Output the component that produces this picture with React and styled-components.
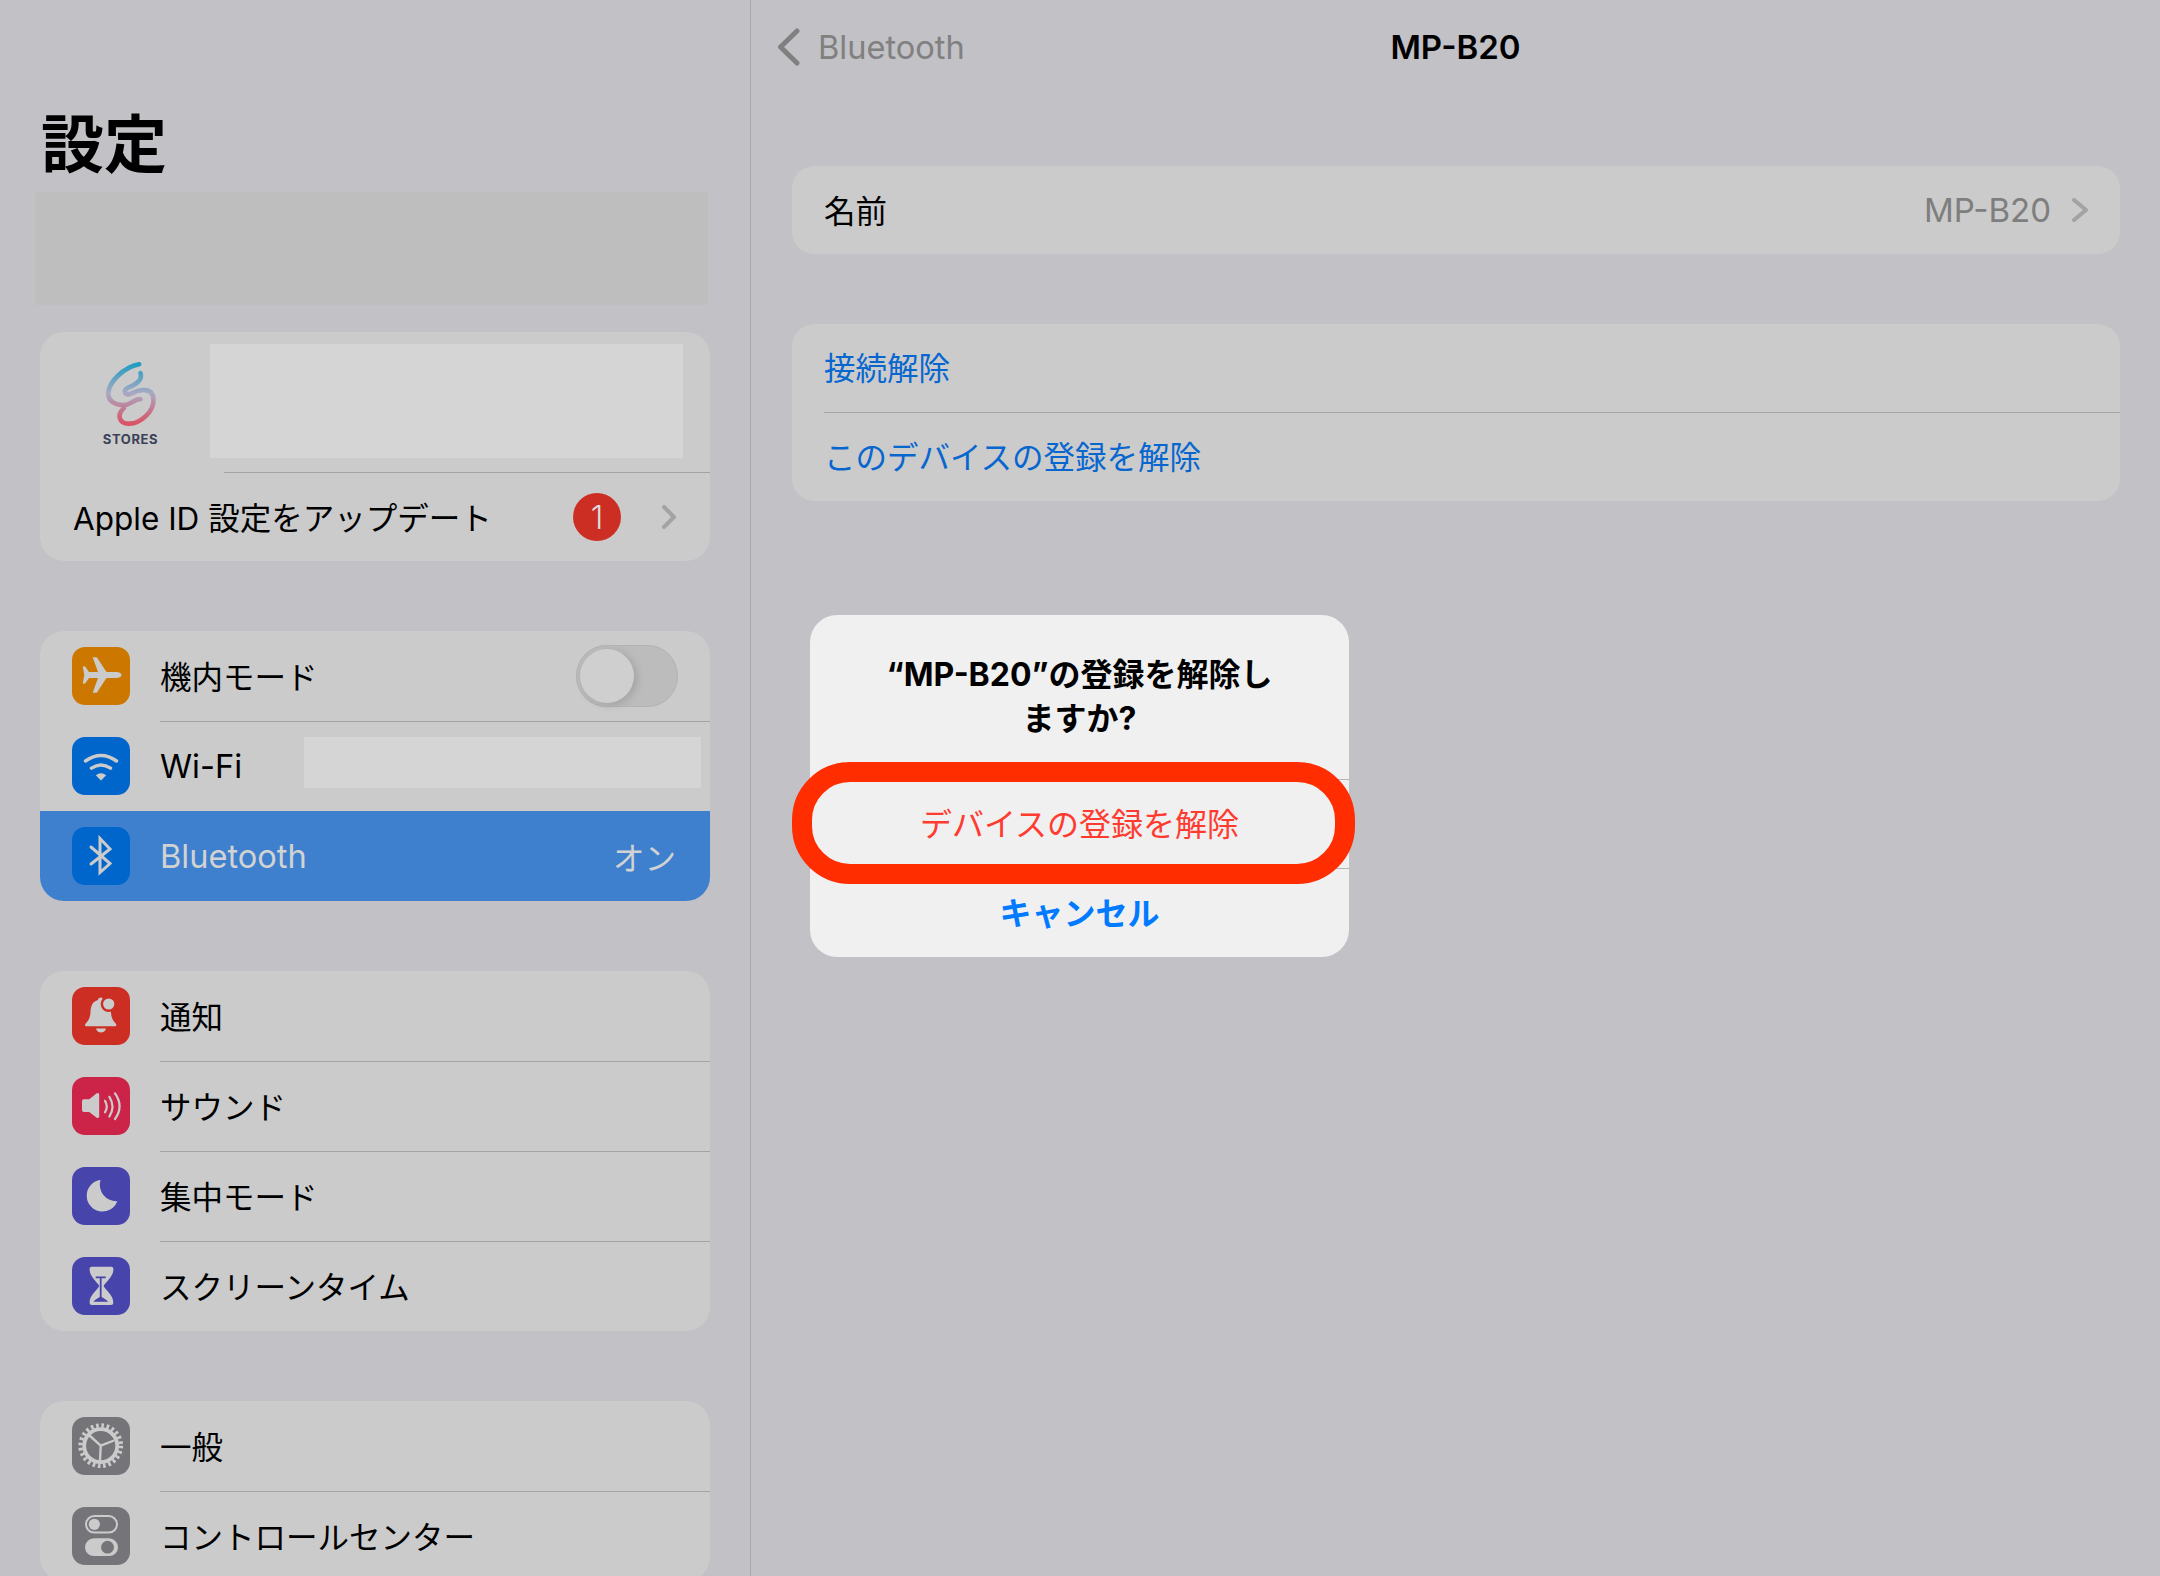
import React from 'react';
import styled, { createGlobalStyle } from 'styled-components';

const Global = createGlobalStyle`
  html, body { margin: 0; padding: 0; background: #c1c1c6; }
  body { font-family: Inter, "Noto Sans CJK JP", sans-serif; }
`;

const Screen = styled.div`
  position: relative;
  width: 2160px;
  height: 1576px;
  overflow: hidden;
  display: flex;
  background: #c1c1c6;
  font-size: 31.5px;
  color: #000;
`;
const Sidebar = styled.aside`
  width: 750px;
  flex: none;
  border-right: 1px solid #a9a9ae;
  display: flex;
  flex-direction: column;
`;
const LargeTitle = styled.h1`
  margin: 100px 0 0 41px;
  height: 92px;
  flex: none;
  font-size: 63px;
  line-height: 88px;
  font-weight: 700;
`;
const SearchPatch = styled.div`
  margin: 0 0 27px 35px;
  width: 673px;
  height: 113px;
  flex: none;
  background: #bebebe;
`;
const Group = styled.section`
  margin: 0 40px 70px 40px;
  flex: none;
  background: #cbcbcb;
  border-radius: 24px;
  overflow: hidden;
`;
const AccountTop = styled.div`
  height: 140px;
  display: flex;
  align-items: flex-start;
`;
const LogoCol = styled.div`
  width: 170px;
  padding: 28px 0 0 11px;
  box-sizing: border-box;
  display: flex;
  flex-direction: column;
  align-items: center;
`;
const StoresWord = styled.span`
  font-size: 13px;
  line-height: 14px;
  font-weight: 700;
  letter-spacing: 0.6px;
  color: #3a4258;
  margin-top: 4px;
`;
const RedactedAccount = styled.div`
  margin-top: 12px;
  width: 473px;
  height: 114px;
  background: #d5d5d5;
`;
const AccountRow = styled.div`
  margin-left: 33px;
  height: 88px;
  display: flex;
  align-items: center;
  padding-right: 34px;
`;
const Rule = styled.div`
  height: 1px;
  margin-left: ${(p) => p.$inset}px;
  background: #a3a3a4;
`;
const Badge = styled.span`
  width: 48px;
  height: 48px;
  margin-left: auto;
  margin-right: 41px;
  border-radius: 50%;
  background: #cc2e24;
  color: #dcdcdc;
  font-size: 32px;
  font-weight: 300;
  display: flex;
  align-items: center;
  justify-content: center;
`;
const Row = styled.div`
  height: 90px;
  display: flex;
  padding-left: 32px;
  gap: 30px;
  background: ${(p) => (p.$selected ? '#3e80ce' : 'transparent')};
  color: ${(p) => (p.$selected ? '#d2d2d2' : '#000')};
`;
const RowBody = styled.div`
  flex: 1;
  min-width: 0;
  display: flex;
  align-items: center;
  justify-content: space-between;
  padding-right: ${(p) => p.$pad ?? 32}px;
  box-shadow: ${(p) => (p.$rule ? 'inset 0 1px 0 #a3a3a4' : 'none')};
`;
const Label = styled.span`
  margin-bottom: 3px;
`;
const LatinLabel = styled.span`
  font-size: 32.6px;
`;
const IconTile = styled.div`
  width: 58px;
  height: 58px;
  flex: none;
  align-self: center;
  border-radius: 13px;
  background: ${(p) => p.$bg};
  svg { display: block; width: 58px; height: 58px; }
`;
const RedactedWifi = styled.div`
  width: 397px;
  height: 51px;
  align-self: flex-start;
  margin-top: 16px;
  background: #d5d5d5;
`;
const Track = styled.div`
  width: 102px;
  height: 62px;
  border-radius: 31px;
  background: #bcbcbc;
  display: flex;
  align-items: center;
  padding-left: 4px;
  box-sizing: border-box;
  box-shadow: inset 0 0 0 1px #b4b4b4;
`;
const Knob = styled.div`
  width: 54px;
  height: 54px;
  border-radius: 50%;
  background: #cfcfcf;
  box-shadow: 3px 2px 8px rgba(0, 0, 0, 0.14);
`;
const Main = styled.main`
  flex: 1;
  min-width: 0;
  padding: 0 40px 0 41px;
  display: flex;
  flex-direction: column;
`;
const NavBar = styled.header`
  height: 94px;
  flex: none;
  margin: 0 -40px 72px -41px;
  display: grid;
  grid-template-columns: 1fr auto 1fr;
  align-items: center;
`;
const BackLink = styled.div`
  padding-left: 26px;
  display: flex;
  align-items: center;
  gap: 18px;
  color: #808080;
  svg { display: block; }
`;
const NavTitle = styled.div`
  font-size: 33px;
  font-weight: 600;
  margin-bottom: 1px;
`;
const DetailGroup = styled.section`
  background: #cbcbcb;
  border-radius: 22px;
  margin-bottom: 70px;
  overflow: hidden;
`;
const DetailRow = styled.div`
  height: 88px;
  display: flex;
  align-items: center;
  justify-content: space-between;
  padding: 0 32px;
`;
const ActionLink = styled.div`
  color: #0866cf;
  margin-bottom: 4px;
`;
const ValueWrap = styled.div`
  display: flex;
  align-items: center;
  gap: 21px;
  color: #7e7e7e;
  svg { display: block; }
`;
const ValueText = styled.span`
  font-size: 33px;
`;
const Dialog = styled.div`
  position: absolute;
  left: 810px;
  top: 615px;
  width: 539px;
  height: 342px;
  background: #f0f0f0;
  border-radius: 27px;
  overflow: hidden;
  display: flex;
  flex-direction: column;
  font-size: 32px;
`;
const DialogTitle = styled.div`
  height: 164px;
  box-sizing: border-box;
  padding-top: 38px;
  text-align: center;
  font-weight: 700;
  line-height: 44px;
`;
const DialogButton = styled.div`
  flex: 1;
  display: flex;
  align-items: center;
  justify-content: center;
  padding-bottom: 5px;
  color: ${(p) => (p.$danger ? '#ff3b30' : '#007aff')};
  font-weight: ${(p) => (p.$danger ? 400 : 700)};
  border-top: 1px solid #b4b4b6;
`;
const Highlight = styled.div`
  position: absolute;
  left: 792px;
  top: 762px;
  width: 563px;
  height: 122px;
  box-sizing: border-box;
  border: 20px solid #ff2d00;
  border-radius: 58px;
`;

const G = '#cbcbcb';

const Plane = () => (
  <svg viewBox="0 0 58 58">
    <path fill={G} d="M49.5 28c0-1.6-2.2-3-5-3H34.5L24.8 10.3H20.7L26 25H17L13.2 19.4H10.7L12.3 28L10.7 36.6H13.2L17 31H26L20.7 45.7H24.8L34.5 31H44.5c2.8 0 5-1.4 5-3Z" />
  </svg>
);
const Wifi = () => (
  <svg viewBox="0 0 58 58">
    <path fill="none" stroke={G} strokeWidth="3.4" strokeLinecap="round" d="M13.5 24Q29 12.8 44.5 24M19.5 31.2Q29 24.6 38.5 31.2" />
    <path fill={G} d="M23.8 38.2Q29 34.4 34.2 38.2L29 43.4Z" />
  </svg>
);
const BluetoothGlyph = () => (
  <svg viewBox="0 0 58 58">
    <path fill="none" stroke={G} strokeWidth="3" strokeLinecap="round" strokeLinejoin="miter" d="M19 20L38 36.5L28 45.5V11.5L38 22L19 37" />
  </svg>
);
const Bell = () => (
  <svg viewBox="0 0 58 58">
    <path fill={G} d="M28.7 10.5c-1.6 0-2.6 1-2.8 2.5C20.5 14.5 18.8 19 18.5 25c-.3 6-2.3 9-4.8 11.5-1.2 1.2-.7 2.7 1 2.7h28c1.7 0 2.2-1.5 1-2.7-2.5-2.5-4.5-5.5-4.7-11C39 20 34 15 31.5 13c-.2-1.5-1.2-2.5-2.8-2.5Z" />
    <path fill={G} d="M24 41.5h10c-.6 2.5-2.6 4-5 4s-4.4-1.5-5-4Z" />
    <circle cx="36.7" cy="17" r="8" fill="#cc2e24" />
    <circle cx="36.7" cy="17" r="5.6" fill={G} />
  </svg>
);
const Speaker = () => (
  <svg viewBox="0 0 58 58">
    <path fill={G} d="M10 24.2c0-1.2.8-2 2-2h5.2L24.4 16.6c1.2-1 2.8-.5 2.8 1.2v21.4c0 1.7-1.6 2.2-2.8 1.2L17.2 35H12c-1.2 0-2-.8-2-2Z" />
    <path fill="none" stroke={G} strokeWidth="2.2" strokeLinecap="round" d="M33 23.8Q36.5 29.5 33 35.3M37.4 19.8Q43.6 29.5 37.4 39.5M43 16.4Q52.2 29.5 43 42" />
  </svg>
);
const Moon = () => (
  <svg viewBox="0 0 58 58">
    <path fill={G} d="M28.5 13A15.8 15.8 0 1 0 45.3 34.2A16.5 16.5 0 0 1 28.5 13Z" />
  </svg>
);
const Hourglass = () => (
  <svg viewBox="0 0 58 58">
    <path fill={G} d="M20 9.8H39c1.6 0 2.4.8 2.4 2.4C41.4 20 33.5 25 31.6 29c1.9 4 9.7 9 9.7 16.5 0 1.7-.8 2.5-2.4 2.5H20c-1.6 0-2.4-.8-2.4-2.5C17.6 38 25.4 33 27.3 29 25.4 25 17.6 20 17.6 12.2c0-1.6.8-2.4 2.4-2.4Z" />
    <path fill="none" stroke="#4744ab" strokeWidth="1.8" d="M23.7 20.4H33.7M28.7 20.4V41" />
    <path fill="#4744ab" d="M21.4 44.8C23.4 42.5 26.5 41 28.7 39.6 31 41 34 42.5 36.2 44.8Z" />
  </svg>
);
const Gear = () => (
  <svg viewBox="0 0 58 58">
    <circle cx="28.7" cy="28.7" r="20.2" fill="none" stroke={G} strokeWidth="4.4" strokeDasharray="2.64 2.65" />
    <circle cx="28.7" cy="28.7" r="16.5" fill="none" stroke={G} strokeWidth="3.8" />
    <path fill="none" stroke={G} strokeWidth="2.4" d="M28.7 28.7L17.5 18.5M28.7 28.7L42 23.5M28.7 28.7L28 44" />
  </svg>
);
const Toggles = () => (
  <svg viewBox="0 0 58 58">
    <rect x="14" y="9" width="31" height="16.6" rx="8.3" fill="none" stroke={G} strokeWidth="2" />
    <circle cx="22.3" cy="17.3" r="5.6" fill={G} />
    <rect x="13" y="31.3" width="33" height="17.8" rx="8.9" fill={G} />
    <circle cx="35.5" cy="40.2" r="6.4" fill="#747479" />
  </svg>
);
const StoresMark = () => (
  <svg width="57" height="68" viewBox="125 60 170 205">
    <defs>
      <linearGradient id="storesGrad" gradientUnits="userSpaceOnUse" x1="200" y1="70" x2="200" y2="258">
        <stop offset="0" stopColor="#1d9cc2" />
        <stop offset="0.48" stopColor="#a9a9c4" />
        <stop offset="1" stopColor="#dd4d5f" />
      </linearGradient>
    </defs>
    <path
      fill="none"
      stroke="url(#storesGrad)"
      strokeWidth="14"
      strokeLinecap="round"
      d="M236 73C190 82 145 125 143 160C141 190 185 207 215 187C232 176 240 178 240 178M240 100C248 120 225 135 200 145C185 155 195 170 215 160C235 150 275 140 279 175C283 215 240 252 205 252C175 252 168 225 190 205"
    />
  </svg>
);
const Chevron = ({ w = 14, h = 24, stroke = '#a3a3a3', sw = 4 }) => (
  <svg width={w} height={h} viewBox={`0 0 ${w} ${h}`}>
    <path fill="none" stroke={stroke} strokeWidth={sw} strokeLinecap="round" strokeLinejoin="round" d={`M${sw / 2} ${sw / 2}L${w - sw / 2} ${h / 2}L${sw / 2} ${h - sw / 2}`} />
  </svg>
);
const BackChevron = () => (
  <svg width="23" height="38" viewBox="0 0 23 38">
    <path fill="none" stroke="#808080" strokeWidth="5" strokeLinecap="round" strokeLinejoin="round" d="M20 3L3.5 19L20 35" />
  </svg>
);

const SettingRow = ({ bg, icon, label, latin, rule, selected, children, pad }) => (
  <Row $selected={selected}>
    <IconTile $bg={bg}>{icon}</IconTile>
    <RowBody $rule={rule} $pad={pad}>
      {latin ? <LatinLabel>{label}</LatinLabel> : <Label>{label}</Label>}
      {children}
    </RowBody>
  </Row>
);

export default function App() {
  return (
    <>
      <Global />
      <Screen>
        <Sidebar>
          <LargeTitle>設定</LargeTitle>
          <SearchPatch />
          <Group>
            <AccountTop>
              <LogoCol>
                <StoresMark />
                <StoresWord>STORES</StoresWord>
              </LogoCol>
              <RedactedAccount />
            </AccountTop>
            <Rule $inset={184} />
            <AccountRow>
              <Label>Apple ID 設定をアップデート</Label>
              <Badge>1</Badge>
              <Chevron />
            </AccountRow>
          </Group>
          <Group>
            <SettingRow bg="#cc7800" icon={<Plane />} label="機内モード">
              <Track><Knob /></Track>
            </SettingRow>
            <SettingRow bg="#0066cc" icon={<Wifi />} label="Wi-Fi" latin rule pad={9}>
              <RedactedWifi />
            </SettingRow>
            <SettingRow bg="#0066cc" icon={<BluetoothGlyph />} label="Bluetooth" latin selected pad={34}>
              <span>オン</span>
            </SettingRow>
          </Group>
          <Group>
            <SettingRow bg="#cc2e24" icon={<Bell />} label="通知" />
            <SettingRow bg="#cc2448" icon={<Speaker />} label="サウンド" rule />
            <SettingRow bg="#4744ab" icon={<Moon />} label="集中モード" rule />
            <SettingRow bg="#4744ab" icon={<Hourglass />} label="スクリーンタイム" rule />
          </Group>
          <Group>
            <SettingRow bg="#747479" icon={<Gear />} label="一般" />
            <SettingRow bg="#747479" icon={<Toggles />} label="コントロールセンター" rule />
          </Group>
        </Sidebar>
        <Main>
          <NavBar>
            <BackLink>
              <BackChevron />
              <LatinLabel>Bluetooth</LatinLabel>
            </BackLink>
            <NavTitle>MP-B20</NavTitle>
            <span />
          </NavBar>
          <DetailGroup>
            <DetailRow>
              <Label>名前</Label>
              <ValueWrap>
                <ValueText>MP-B20</ValueText>
                <Chevron w={16} />
              </ValueWrap>
            </DetailRow>
          </DetailGroup>
          <DetailGroup>
            <DetailRow><ActionLink>接続解除</ActionLink></DetailRow>
            <Rule $inset={32} />
            <DetailRow><ActionLink>このデバイスの登録を解除</ActionLink></DetailRow>
          </DetailGroup>
        </Main>
        <Dialog>
          <DialogTitle>“MP-B20”の登録を解除し<br />ますか?</DialogTitle>
          <DialogButton $danger>デバイスの登録を解除</DialogButton>
          <DialogButton>キャンセル</DialogButton>
        </Dialog>
        <Highlight />
      </Screen>
    </>
  );
}
